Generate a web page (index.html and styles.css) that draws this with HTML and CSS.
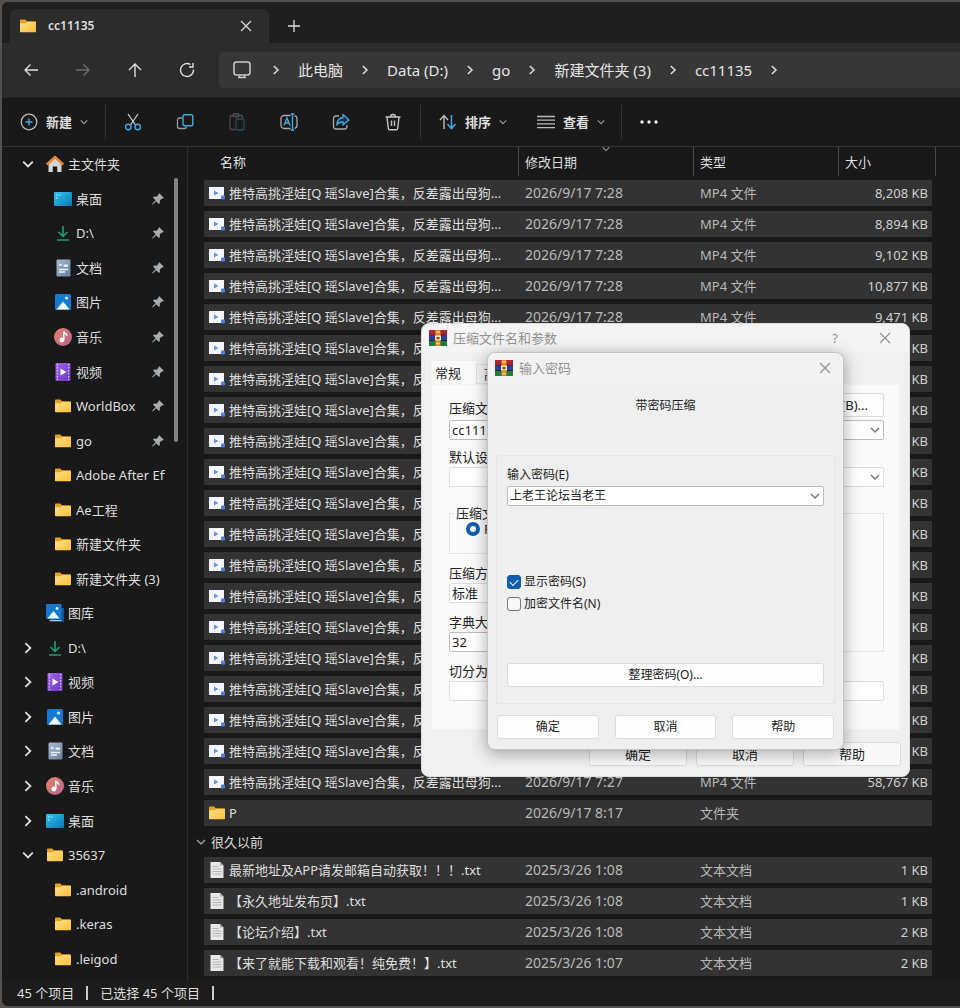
FILE: index.html
```html
<!DOCTYPE html>
<html lang="zh-CN">
<head>
<meta charset="utf-8">
<meta name="viewport" content="width=device-width, initial-scale=1">
<title>cc11135</title>
<link rel="stylesheet" href="styles.css">
</head>
<body>
<svg class="sprite" aria-hidden="true">
  <defs>
    <linearGradient id="g-folder" x1="0" y1="0" x2="1" y2="1"><stop offset="0" stop-color="#ffe08a"/><stop offset="1" stop-color="#fbbf3c"/></linearGradient>
    <linearGradient id="g-desk" x1="0" y1="0" x2="1" y2="1"><stop offset="0" stop-color="#35c3ea"/><stop offset="1" stop-color="#0b78b8"/></linearGradient>
    <linearGradient id="g-music" x1="0" y1="0" x2="1" y2="1"><stop offset="0" stop-color="#e8835f"/><stop offset="1" stop-color="#b5619a"/></linearGradient>
    <linearGradient id="g-video" x1="0" y1="0" x2="1" y2="1"><stop offset="0" stop-color="#a566ea"/><stop offset="1" stop-color="#6a35c4"/></linearGradient>
    <linearGradient id="g-doc" x1="0" y1="0" x2="1" y2="1"><stop offset="0" stop-color="#a9bace"/><stop offset="1" stop-color="#64809f"/></linearGradient>
    <symbol id="folder" viewBox="0 0 18 18"><path d="M1 3.6c0-.6.4-1 1-1h4.2l1.8 1.7h8c.6 0 1 .4 1 1V8H1z" fill="#e9a21f"/><path d="M1 6.3h5.6l1.6-1.2H16c.6 0 1 .4 1 1v8.2c0 .6-.4 1-1 1H2c-.6 0-1-.4-1-1z" fill="url(#g-folder)"/></symbol>
    <symbol id="desk" viewBox="0 0 18 18"><rect x="0" y="2" width="18" height="14" rx="1.2" fill="url(#g-desk)"/><path d="M2 5h1.6M2 8h1.6M5 5h1.4" stroke="#c8f4ff" stroke-width="1.2"/></symbol>
    <symbol id="down" viewBox="0 0 18 18"><path d="M9 2v10M4.500 8L9 12.400 13.500 8M3 16h12" fill="none" stroke="#1a9a6c" stroke-width="1.700"/></symbol>
    <symbol id="doc" viewBox="0 0 18 18"><rect x="2.500" y=".5" width="14" height="17" rx="1.300" fill="url(#g-doc)"/><path d="M5 6h3M10.500 7h3.500M5 10.500h9M5 13h6" stroke="#e9f1f9" stroke-width="1.400"/><path d="M9.500 5.500h4.500v2H9.500z" fill="#e9f1f9"/></symbol>
    <symbol id="pic" viewBox="0 0 18 18"><rect x="1" y="1" width="16" height="16" rx="1.500" fill="#1479cf"/><path d="M2.500 16.500L9 8.500l6.500 8z" fill="#f4fbff"/><circle cx="12.500" cy="5" r="1.500" fill="#d6f1ff"/></symbol>
    <symbol id="gallery" viewBox="0 0 18 18"><path d="M4 4h14v14H4z" fill="#14558f"/><path d="M3.500 16.500h12" stroke="#a8d4f2"/><rect x="0" y="0" width="15.500" height="15" rx="1.300" fill="#1479cf"/><path d="M1.500 14.500L7.500 7l6 7.500z" fill="#f4fbff"/><circle cx="11" cy="4.500" r="1.400" fill="#d6f1ff"/></symbol>
    <symbol id="music" viewBox="0 0 18 18"><circle cx="9" cy="9" r="9" fill="url(#g-music)"/><path d="M9.800 12V3.500c.5 2 3 2 3 4.200" fill="none" stroke="#fff" stroke-width="1.500"/><circle cx="7.900" cy="12" r="2.400" fill="#fff"/></symbol>
    <symbol id="video" viewBox="0 0 18 18"><rect x="1.500" y="0" width="15" height="18" rx="1.300" fill="url(#g-video)"/><path d="M3.400 1v16M14.600 1v16" stroke="#d9bcff" stroke-width="1.300" stroke-dasharray="1.400 1.600"/><path d="M6.500 5.500v7L12.500 9z" fill="#fff"/></symbol>
    <symbol id="home" viewBox="0 0 18 18"><path d="M2.500 8.500L9 3l6.500 5.500V17h-4.300v-5.500H6.800V17H2.500z" fill="#d6d3d3"/><path d="M.8 9.500L9 2l8.200 7.500" fill="none" stroke="#e08335" stroke-width="2.400" stroke-linejoin="round"/></symbol>
    <symbol id="pin" viewBox="0 0 14 14"><path d="M8.300 1.200l4.500 4.500-1 .9-1-.1-2 2 .1 2.500-1 1-2.700-2.700L1.700 12.500l-.5-.2.2-.7 3.200-3.400L2 5.600l1-1 2.500.1 2-2-.1-.8z" fill="#a9adb0"/></symbol>
    <symbol id="cr" viewBox="0 0 10 10"><path d="M2.800 1l4.200 4-4.200 4" fill="none" stroke="currentColor" stroke-width="1.500"/></symbol>
    <symbol id="cd" viewBox="0 0 10 10"><path d="M1 3l4 4 4-4" fill="none" stroke="currentColor" stroke-width="1.500"/></symbol>
    <symbol id="x" viewBox="0 0 12 12"><path d="M1 1l10 10M11 1L1 11" fill="none" stroke="currentColor" stroke-width="1.200"/></symbol>
    <symbol id="mp4" viewBox="0 0 18 18"><rect x="1" y="3" width="15" height="12" fill="#f3f6ff"/><path d="M6 6.500v5l4.500-2.500z" fill="#6f8fdc"/><rect x="13" y="11.500" width="4" height="4" rx="1" fill="#4f7edb"/></symbol>
    <symbol id="txt" viewBox="0 0 18 18"><path d="M2.500 1H12l3.500 3.500V17h-13z" fill="#e8e8e8"/><path d="M12 1v3.500h3.500" fill="#aaa"/><path d="M4.500 5.500h6M4.500 8h9M4.500 10.500h9M4.500 13h9" stroke="#b4b4b4"/></symbol>
    <symbol id="rar" viewBox="0 0 18 16"><rect y="0" width="18" height="5.300" fill="#b3243a"/><rect y="5.300" width="18" height="5.300" fill="#2b3f9b"/><rect y="10.600" width="18" height="5.400" fill="#1f7a3c"/><path d="M0 5.200h18M0 10.500h18" stroke="#2a1a22" stroke-width=".9"/><rect x="6.500" y="0" width="5" height="16" fill="#d98b2b"/><path d="M7 2h4M7 13.500h4" stroke="#f6cf5a" stroke-width="1.500"/><rect x="6" y="5.500" width="6" height="5" fill="#f1dfb0"/><rect x="7.500" y="7" width="3" height="2.200" fill="#8a4a1c"/></symbol>
  </defs>
</svg>

<div class="window">
  <header class="tabs">
    <div class="tab"><svg class="i18"><use href="#folder"/></svg><span class="tab-name">cc11135</span><button class="plain" aria-label="关闭标签页"><svg class="i12"><use href="#x"/></svg></button></div>
    <button class="plain new-tab" aria-label="新标签页"><svg class="i12" viewBox="0 0 12 12"><path d="M6 0v12M0 6h12" stroke="currentColor" stroke-width="1.300"/></svg></button>
  </header>

  <nav class="navbar" aria-label="导航">
    <div class="nav-buttons">
      <button class="plain" aria-label="后退"><svg class="i16" viewBox="0 0 16 16"><path d="M15 8H2M7.500 2.500L2 8l5.500 5.500" fill="none" stroke="currentColor" stroke-width="1.400"/></svg></button>
      <button class="plain dim" aria-label="前进"><svg class="i16" viewBox="0 0 16 16"><path d="M1 8h13M8.500 2.500L14 8l-5.500 5.500" fill="none" stroke="currentColor" stroke-width="1.400"/></svg></button>
      <button class="plain" aria-label="上一级"><svg class="i16" viewBox="0 0 16 16"><path d="M8 15V2M2 8l6-6 6 6" fill="none" stroke="currentColor" stroke-width="1.400"/></svg></button>
      <button class="plain" aria-label="刷新"><svg class="i16" viewBox="0 0 16 16"><path d="M14.500 7.500A6.500 6.500 0 1 1 11.500 2.500M14 1v4h-4" fill="none" stroke="currentColor" stroke-width="1.400"/></svg></button>
    </div>
    <div class="address">
      <svg class="i18 pc" viewBox="0 0 18 18"><rect x="1" y="1" width="16" height="13" rx="2.500" fill="none" stroke="#ccc" stroke-width="1.500"/><path d="M5 16.500h8M6.500 14.500v2M11.500 14.500v2" stroke="#ccc" stroke-width="1.400"/></svg>
      <svg class="i10"><use href="#cr"/></svg><a href="#">此电脑</a>
      <svg class="i10"><use href="#cr"/></svg><a href="#">Data (D:)</a>
      <svg class="i10"><use href="#cr"/></svg><a href="#">go</a>
      <svg class="i10"><use href="#cr"/></svg><a href="#">新建文件夹 (3)</a>
      <svg class="i10"><use href="#cr"/></svg><a href="#">cc11135</a>
      <svg class="i10"><use href="#cr"/></svg>
    </div>
  </nav>

  <div class="toolbar" role="toolbar" aria-label="命令">
    <button class="cmd cmd-new"><svg class="i18" viewBox="0 0 18 18"><circle cx="9" cy="9" r="7.800" fill="none" stroke="#bbb" stroke-width="1.300"/><path d="M9 5.500v7M5.500 9h7" stroke="#45a9e0" stroke-width="1.400"/></svg>新建<svg class="i8"><use href="#cd"/></svg></button>
    <span class="rule"></span>
    <button class="tool" aria-label="剪切"><svg class="i18" viewBox="0 0 18 18"><path d="M4 1l7.500 11M14 1L6.500 12" stroke="#ccc" stroke-width="1.300"/><g fill="none" stroke="#45a9e0" stroke-width="1.400"><circle cx="4.300" cy="14" r="2.700"/><circle cx="13.700" cy="14" r="2.700"/></g></svg></button>
    <button class="tool" aria-label="复制"><svg class="i18" viewBox="0 0 18 18"><path d="M6 5H3.500A2 2 0 0 0 1.500 7v6.500a2 2 0 0 0 2 2h5a2 2 0 0 0 2-1.500" fill="none" stroke="#999" stroke-width="1.300"/><rect x="7" y="1.800" width="9.800" height="11" rx="1.800" fill="none" stroke="#45a9e0" stroke-width="1.400"/></svg></button>
    <button class="tool" aria-label="粘贴"><svg class="i18" viewBox="0 0 18 18"><path d="M7 16.500H3.500a1.500 1.500 0 0 1-1.500-1.500V4a1.500 1.500 0 0 1 1.500-1.500H5M11 2.500h2A1.500 1.500 0 0 1 14.500 4v1M5.500 1h5v2.500h-5z" fill="none" stroke="#4d4d4d" stroke-width="1.300"/><rect x="8" y="6" width="8" height="11" rx="1.300" fill="none" stroke="#25505a" stroke-width="1.300"/></svg></button>
    <button class="tool" aria-label="重命名"><svg class="i18" viewBox="0 0 18 18"><path d="M10.500 2.500H4A3 3 0 0 0 1 5.500v7a3 3 0 0 0 3 3h6.500M14.500 2.700c1.600.3 2.500 1.300 2.500 2.800v7c0 1.500-.9 2.500-2.500 2.800" fill="none" stroke="#aaa" stroke-width="1.300"/><path d="M4 12.500L7 5l3 7.500M5 10h4M12.500 1v16M10.700 1h3.600M10.700 17h3.600" fill="none" stroke="#45a9e0" stroke-width="1.400"/></svg></button>
    <button class="tool" aria-label="共享"><svg class="i18" viewBox="0 0 18 18"><path d="M7 3H4A2.500 2.500 0 0 0 1.500 5.500v8A2.500 2.500 0 0 0 4 16h8.500a2.500 2.500 0 0 0 2.500-2.500V12" fill="none" stroke="#aaa" stroke-width="1.300"/><path d="M11 1.500L17 7l-6 5V9C8 9 6 10 4.800 12c.2-4 2.500-7 6.200-7.500z" fill="#12364b" stroke="#45a9e0" stroke-width="1.300" stroke-linejoin="round"/></svg></button>
    <button class="tool" aria-label="删除"><svg class="i18" viewBox="0 0 18 18"><path d="M1.500 4h15M6.500 4a2.500 2.500 0 0 1 5 0M3 4l1.300 11.500a1.500 1.500 0 0 0 1.500 1.300h6.400a1.500 1.500 0 0 0 1.500-1.300L15 4M7.500 7.500v5.500M10.500 7.500v5.500" fill="none" stroke="#c4c4c4" stroke-width="1.400"/></svg></button>
    <span class="rule"></span>
    <button class="cmd cmd-sort"><svg class="i18" viewBox="0 0 18 18"><path d="M5 16V3M1 7l4-4.500L9 7" fill="none" stroke="#bbb" stroke-width="1.400"/><path d="M12.500 2v13.500M8.500 11l4 4.500 4-4.500" fill="none" stroke="#45a9e0" stroke-width="1.500"/></svg>排序<svg class="i8"><use href="#cd"/></svg></button>
    <button class="cmd cmd-view"><svg class="i18" viewBox="0 0 18 18"><path d="M0 3.500h18M0 7.200h18M0 10.900h18M0 14.600h18" stroke="#bbb" stroke-width="1.300"/></svg>查看<svg class="i8"><use href="#cd"/></svg></button>
    <span class="rule"></span>
    <button class="tool" aria-label="更多"><svg class="i18" viewBox="0 0 18 18"><g fill="#eee"><circle cx="2" cy="9" r="1.700"/><circle cx="9" cy="9" r="1.700"/><circle cx="16" cy="9" r="1.700"/></g></svg></button>
  </div>

  <div class="content">
    <aside class="sidebar">
      <ul class="tree">
        <li class="node"><svg class="i12 twist"><use href="#cd"/></svg><svg class="i18"><use href="#home"/></svg><span>主文件夹</span></li>
        <li class="node sub"><svg class="i18"><use href="#desk"/></svg><span>桌面</span><svg class="i14"><use href="#pin"/></svg></li>
        <li class="node sub"><svg class="i18"><use href="#down"/></svg><span>D:\</span><svg class="i14"><use href="#pin"/></svg></li>
        <li class="node sub"><svg class="i18"><use href="#doc"/></svg><span>文档</span><svg class="i14"><use href="#pin"/></svg></li>
        <li class="node sub"><svg class="i18"><use href="#pic"/></svg><span>图片</span><svg class="i14"><use href="#pin"/></svg></li>
        <li class="node sub"><svg class="i18"><use href="#music"/></svg><span>音乐</span><svg class="i14"><use href="#pin"/></svg></li>
        <li class="node sub"><svg class="i18"><use href="#video"/></svg><span>视频</span><svg class="i14"><use href="#pin"/></svg></li>
        <li class="node sub"><svg class="i18"><use href="#folder"/></svg><span>WorldBox</span><svg class="i14"><use href="#pin"/></svg></li>
        <li class="node sub"><svg class="i18"><use href="#folder"/></svg><span>go</span><svg class="i14"><use href="#pin"/></svg></li>
        <li class="node sub"><svg class="i18"><use href="#folder"/></svg><span>Adobe After Effects</span></li>
        <li class="node sub"><svg class="i18"><use href="#folder"/></svg><span>Ae工程</span></li>
        <li class="node sub"><svg class="i18"><use href="#folder"/></svg><span>新建文件夹</span></li>
        <li class="node sub"><svg class="i18"><use href="#folder"/></svg><span>新建文件夹 (3)</span></li>
        <li class="node leaf"><svg class="i18"><use href="#gallery"/></svg><span>图库</span></li>
        <li class="node"><svg class="i12 twist"><use href="#cr"/></svg><svg class="i18"><use href="#down"/></svg><span>D:\</span></li>
        <li class="node"><svg class="i12 twist"><use href="#cr"/></svg><svg class="i18"><use href="#video"/></svg><span>视频</span></li>
        <li class="node"><svg class="i12 twist"><use href="#cr"/></svg><svg class="i18"><use href="#pic"/></svg><span>图片</span></li>
        <li class="node"><svg class="i12 twist"><use href="#cr"/></svg><svg class="i18"><use href="#doc"/></svg><span>文档</span></li>
        <li class="node"><svg class="i12 twist"><use href="#cr"/></svg><svg class="i18"><use href="#music"/></svg><span>音乐</span></li>
        <li class="node"><svg class="i12 twist"><use href="#cr"/></svg><svg class="i18"><use href="#desk"/></svg><span>桌面</span></li>
        <li class="node"><svg class="i12 twist"><use href="#cd"/></svg><svg class="i18"><use href="#folder"/></svg><span>35637</span></li>
        <li class="node sub"><svg class="i18"><use href="#folder"/></svg><span>.android</span></li>
        <li class="node sub"><svg class="i18"><use href="#folder"/></svg><span>.keras</span></li>
        <li class="node sub"><svg class="i18"><use href="#folder"/></svg><span>.leigod</span></li>
      </ul>
      <div class="thumb"></div>
    </aside>

    <main class="list">
      <table class="files">
        <colgroup><col><col class="c-date"><col class="c-type"><col class="c-size"><col class="c-end"></colgroup>
        <thead>
          <tr><th class="h-name">名称</th><th>修改日期<svg class="sort"><use href="#cd"/></svg></th><th>类型</th><th>大小</th><th class="end"></th></tr>
        </thead>
        <tbody>
          <tr><td><svg class="i18"><use href="#mp4"/></svg>推特高挑淫娃[Q 瑶Slave]合集，反差露出母狗...</td><td>2026/9/17 7:28</td><td>MP4 文件</td><td>8,208 KB</td></tr>
          <tr><td><svg class="i18"><use href="#mp4"/></svg>推特高挑淫娃[Q 瑶Slave]合集，反差露出母狗...</td><td>2026/9/17 7:28</td><td>MP4 文件</td><td>8,894 KB</td></tr>
          <tr><td><svg class="i18"><use href="#mp4"/></svg>推特高挑淫娃[Q 瑶Slave]合集，反差露出母狗...</td><td>2026/9/17 7:28</td><td>MP4 文件</td><td>9,102 KB</td></tr>
          <tr><td><svg class="i18"><use href="#mp4"/></svg>推特高挑淫娃[Q 瑶Slave]合集，反差露出母狗...</td><td>2026/9/17 7:28</td><td>MP4 文件</td><td>10,877 KB</td></tr>
          <tr><td><svg class="i18"><use href="#mp4"/></svg>推特高挑淫娃[Q 瑶Slave]合集，反差露出母狗...</td><td>2026/9/17 7:28</td><td>MP4 文件</td><td>9,471 KB</td></tr>
          <tr><td><svg class="i18"><use href="#mp4"/></svg>推特高挑淫娃[Q 瑶Slave]合集，反差露出母狗...</td><td></td><td></td><td>KB</td></tr>
          <tr><td><svg class="i18"><use href="#mp4"/></svg>推特高挑淫娃[Q 瑶Slave]合集，反差露出母狗...</td><td></td><td></td><td>KB</td></tr>
          <tr><td><svg class="i18"><use href="#mp4"/></svg>推特高挑淫娃[Q 瑶Slave]合集，反差露出母狗...</td><td></td><td></td><td>KB</td></tr>
          <tr><td><svg class="i18"><use href="#mp4"/></svg>推特高挑淫娃[Q 瑶Slave]合集，反差露出母狗...</td><td></td><td></td><td>KB</td></tr>
          <tr><td><svg class="i18"><use href="#mp4"/></svg>推特高挑淫娃[Q 瑶Slave]合集，反差露出母狗...</td><td></td><td></td><td>KB</td></tr>
          <tr><td><svg class="i18"><use href="#mp4"/></svg>推特高挑淫娃[Q 瑶Slave]合集，反差露出母狗...</td><td></td><td></td><td>KB</td></tr>
          <tr><td><svg class="i18"><use href="#mp4"/></svg>推特高挑淫娃[Q 瑶Slave]合集，反差露出母狗...</td><td></td><td></td><td>KB</td></tr>
          <tr><td><svg class="i18"><use href="#mp4"/></svg>推特高挑淫娃[Q 瑶Slave]合集，反差露出母狗...</td><td></td><td></td><td>KB</td></tr>
          <tr><td><svg class="i18"><use href="#mp4"/></svg>推特高挑淫娃[Q 瑶Slave]合集，反差露出母狗...</td><td></td><td></td><td>KB</td></tr>
          <tr><td><svg class="i18"><use href="#mp4"/></svg>推特高挑淫娃[Q 瑶Slave]合集，反差露出母狗...</td><td></td><td></td><td>KB</td></tr>
          <tr><td><svg class="i18"><use href="#mp4"/></svg>推特高挑淫娃[Q 瑶Slave]合集，反差露出母狗...</td><td></td><td></td><td>KB</td></tr>
          <tr><td><svg class="i18"><use href="#mp4"/></svg>推特高挑淫娃[Q 瑶Slave]合集，反差露出母狗...</td><td></td><td></td><td>KB</td></tr>
          <tr><td><svg class="i18"><use href="#mp4"/></svg>推特高挑淫娃[Q 瑶Slave]合集，反差露出母狗...</td><td></td><td></td><td>KB</td></tr>
          <tr><td><svg class="i18"><use href="#mp4"/></svg>推特高挑淫娃[Q 瑶Slave]合集，反差露出母狗...</td><td></td><td></td><td>KB</td></tr>
          <tr><td><svg class="i18"><use href="#mp4"/></svg>推特高挑淫娃[Q 瑶Slave]合集，反差露出母狗...</td><td>2026/9/17 7:27</td><td>MP4 文件</td><td>58,767 KB</td></tr>
          <tr><td><svg class="i18"><use href="#folder"/></svg>P</td><td>2026/9/17 8:17</td><td>文件夹</td><td></td></tr>
        </tbody>
        <tbody>
          <tr><th class="group" colspan="5"><button class="group-toggle"><svg class="i10"><use href="#cd"/></svg>很久以前</button></th></tr>
          <tr><td><svg class="i18"><use href="#txt"/></svg>最新地址及APP请发邮箱自动获取！！！.txt</td><td>2025/3/26 1:08</td><td>文本文档</td><td>1 KB</td></tr>
          <tr><td><svg class="i18"><use href="#txt"/></svg>【永久地址发布页】.txt</td><td>2025/3/26 1:08</td><td>文本文档</td><td>1 KB</td></tr>
          <tr><td><svg class="i18"><use href="#txt"/></svg>【论坛介绍】.txt</td><td>2025/3/26 1:08</td><td>文本文档</td><td>2 KB</td></tr>
          <tr><td><svg class="i18"><use href="#txt"/></svg>【来了就能下载和观看！纯免费！】.txt</td><td>2025/3/26 1:07</td><td>文本文档</td><td>2 KB</td></tr>
        </tbody>
      </table>
    </main>
  </div>

  <footer class="status"><span>45 个项目</span><span class="bar"></span><span>已选择 45 个项目</span><span class="bar"></span></footer>
</div>

<section class="dialog archive" role="dialog" aria-label="压缩文件名和参数">
  <header class="caption"><svg class="rar"><use href="#rar"/></svg><span>压缩文件名和参数</span><button class="plain" aria-label="帮助主题">?</button><button class="plain" aria-label="关闭"><svg class="i12"><use href="#x"/></svg></button></header>
  <div class="sheet-tabs" role="tablist"><button role="tab" class="sheet-tab on" aria-selected="true">常规</button><button role="tab" class="sheet-tab">高级</button></div>
  <div class="sheet">
    <div class="row"><label for="arc">压缩文件名(A)</label><button class="btn browse">浏览(B)...</button></div>
    <div class="combo"><select id="arc"><option>cc11135.rar</option></select><svg class="i10"><use href="#cd"/></svg></div>
    <label class="cap" for="profile">默认设置</label>
    <div class="combo light"><select id="profile"><option></option></select><svg class="i10"><use href="#cd"/></svg></div>
    <div class="split">
      <div class="left">
        <fieldset class="format"><legend>压缩文件格式</legend><input type="radio" id="fmt" name="fmt" checked><label for="fmt">RAR</label></fieldset>
        <label class="cap" for="method">压缩方式(C)</label>
        <div class="combo light"><select id="method"><option>标准</option></select></div>
        <label class="cap" for="dict">字典大小(I)</label>
        <div class="combo"><select id="dict"><option>32</option></select></div>
      </div>
      <div class="options"></div>
    </div>
    <label class="cap" for="vol">切分为分卷(V)，大小</label>
    <input class="volume" id="vol" type="text">
  </div>
  <div class="actions"><button class="btn">确定</button><button class="btn">取消</button><button class="btn">帮助</button></div>
</section>

<section class="dialog password" role="dialog" aria-label="输入密码">
  <header class="caption"><svg class="rar"><use href="#rar"/></svg><span>输入密码</span><button class="plain" aria-label="关闭"><svg class="i12"><use href="#x"/></svg></button></header>
  <p class="heading">带密码压缩</p>
  <div class="box">
    <label for="pwd">输入密码(E)</label>
    <div class="combo"><select id="pwd"><option>上老王论坛当老王</option></select><svg class="i10"><use href="#cd"/></svg></div>
    <div class="checks">
      <label class="check"><input type="checkbox" checked>显示密码(S)</label>
      <label class="check"><input type="checkbox">加密文件名(N)</label>
    </div>
    <button class="btn organize">整理密码(O)...</button>
  </div>
  <div class="actions"><button class="btn">确定</button><button class="btn">取消</button><button class="btn">帮助</button></div>
</section>
</body>
</html>
```
FILE: styles.css
```css
* { box-sizing: border-box; }

body {
  margin: 0;
  min-height: 100vh;
  display: flex;
  position: relative;
  background: #55504d;
  color: #dedede;
  font: 13px/18px "Noto Sans", "Noto Sans CJK SC", sans-serif;
}

button, select, input { font: inherit; color: inherit; }
button { padding: 0; border: 0; background: none; }
svg { display: block; flex: none; }
.sprite { position: absolute; width: 0; height: 0; }
.i8 { width: 8px; height: 8px; }
.i10 { width: 10px; height: 10px; }
.i12 { width: 12px; height: 12px; }
.i14 { width: 14px; height: 14px; }
.i16 { width: 16px; height: 16px; }
.i18 { width: 18px; height: 18px; }
.plain { display: grid; place-items: center; }

.window {
  flex: 1;
  min-width: 0;
  margin: 2px 0 2px 2px;
  display: flex;
  flex-direction: column;
  background: #191919;
  border-radius: 6px 0 0 6px;
  overflow: hidden;
}

/* Tab strip */
.tabs { display: flex; background: #1f1f1f; padding: 7px 0 0 8px; }
.tab {
  display: flex;
  align-items: center;
  width: 259px;
  height: 34px;
  padding: 0 17px 0 9px;
  background: #2c2c2c;
  border-radius: 7px 7px 0 0;
}
.tab-name { flex: 1; margin-left: 11px; font-size: 12px; font-weight: 600; }
.new-tab { width: 50px; height: 34px; }

/* Navigation */
.navbar { display: flex; align-items: center; height: 54px; background: #2c2c2c; }
.nav-buttons { display: flex; gap: 36px; padding: 0 24px 0 21px; }
.dim { color: #6b6b6b; }
.address {
  flex: 1;
  display: flex;
  align-items: center;
  gap: 17px;
  height: 36px;
  padding-left: 14px;
  background: #373737;
  border-radius: 5px 0 0 5px;
  font-size: 15px;
  white-space: nowrap;
}
.address a { color: #e4e4e4; text-decoration: none; }
.pc { margin-right: 3px; }

/* Commands */
.toolbar {
  display: flex;
  align-items: center;
  height: 50px;
  border-top: 1px solid #222;
  border-bottom: 1px solid #333;
}
.cmd { display: flex; align-items: center; gap: 8px; font-weight: 600; }
.cmd .i8 { color: #999; }
.cmd-new { padding: 0 16px 0 18px; }
.cmd-sort { padding: 0 15px 0 17px; }
.cmd-view { padding: 0 15px; }
.tool { display: grid; place-items: center; width: 52px; height: 36px; }
.rule { width: 1px; height: 34px; margin: 0 1px; background: #333; }

.content { display: flex; }

/* Folder tree */
.sidebar { position: relative; width: 186px; flex: none; border-right: 1px solid #2d2d2d; padding-bottom: 5px; }
.tree { display: grid; grid-auto-rows: 1fr; height: 100%; margin: 0; padding: 0; list-style: none; }
.node { display: flex; align-items: center; gap: 4px; padding: 0 22px 0 20px; white-space: nowrap; min-width: 0; }
.node.leaf { padding-left: 44px; }
.node.sub { padding-left: 52px; }
.node span { flex: 1; overflow: hidden; }
.twist { margin-right: 8px; }
.thumb { position: absolute; top: 31px; right: 9px; width: 4px; height: 264px; border-radius: 2px; background: #858585; }

/* File list */
.list { flex: 1; min-width: 0; padding: 0 24px 0 16px; }
.files { width: 100%; table-layout: fixed; border-collapse: separate; border-spacing: 0; white-space: nowrap; }
.c-date { width: 175px; }
.c-type { width: 145px; }
.c-size { width: 94px; }
.c-end { width: 4px; }
.files thead th {
  position: relative;
  height: 33px;
  padding: 0 0 0 7px;
  border-bottom: 4px solid #191919;
  background: linear-gradient(#4a4a4a, #4a4a4a) left / 1px 100% no-repeat padding-box;
  font-weight: 400;
  text-align: left;
}
.files thead .h-name { padding-left: 16px; background: none; }
.files thead .end { background-position: right; }
.sort { position: absolute; top: -2px; left: 83px; width: 10px; height: 8px; color: #888; }
.files td {
  height: 31px;
  padding: 0 4px 0 7px;
  background: #333;
  border-bottom: 5px solid #191919;
  color: #b9b9b9;
}
.files td:first-child { padding-left: 4px; color: #dedede; }
.files td:first-child .i18 { display: inline-block; margin-right: 3px; vertical-align: -4px; }
.files td:nth-child(2) { font-size: 14px; }
.files td:nth-child(4) { text-align: right; color: #cfcfcf; }
.group { height: 26px; padding: 0 0 5px; text-align: left; font-weight: 400; }
.group-toggle { display: flex; align-items: center; gap: 5px; margin-left: -8px; }
.group-toggle svg { color: #999; }

.status { flex: 1; display: flex; align-items: center; gap: 12px; padding: 0 15px 2px; background: #1c1c1c; }
.bar { width: 2px; height: 14px; background: #ccc; }

/* Dialogs */
.dialog {
  position: absolute;
  display: flex;
  flex-direction: column;
  border-radius: 8px;
  color: #222;
  line-height: 16px;
  white-space: nowrap;
}
.archive { left: 421px; top: 323px; width: 489px; background: #f0f0f0; border: 1px solid #ddd; font-size: 13px; }
.password { left: 487px; top: 352px; width: 357px; background: #efefef; border: 1px solid #c4c4c4; box-shadow: 0 3px 16px rgba(0, 0, 0, .35); font-size: 12px; }
.caption { display: flex; align-items: center; height: 28px; padding: 0 18px 0 7px; color: #929292; font-size: 13px; background: #f4f4f4; border-radius: 8px 8px 0 0; }
.caption span { flex: 1; margin-left: 6px; }
.caption .plain + .plain { margin-left: 41px; }
.password .caption { height: 30px; padding-right: 12px; background: #f2f2f2; }
.rar { width: 18px; height: 16px; }

.btn { height: 24px; background: #fdfdfd; border: 1px solid #dcdcdc; border-radius: 3px; }
.actions { display: flex; justify-content: flex-end; }
.archive .actions { gap: 9px; padding: 12px 8px 10px; }
.archive .actions .btn { width: 98px; background: #f8f8f8; }
.password .actions { gap: 16px; padding: 11px 9px 10px; }
.password .actions .btn { flex: 1; }

.combo { display: grid; align-items: center; }
.combo select, .combo svg { grid-area: 1 / 1; }
.combo select, .volume {
  appearance: none;
  width: 100%;
  height: 20px;
  margin: 0;
  padding: 0 2px;
  background: #fff;
  border: 1px solid #bdbdbd;
  border-radius: 2px;
}
.combo.light select, .volume { border-color: #dedede; }
.combo svg { justify-self: end; margin-right: 4px; color: #777; pointer-events: none; }

.sheet-tabs { display: flex; align-items: end; padding: 9px 9px 0; }
.sheet-tab { height: 20px; padding: 0 7px; background: #f3f3f3; border: 1px solid #e0e0e0; }
.sheet-tab.on { height: 23px; width: 45px; padding: 0 4px; text-align: left; background: #fafafa; border: 0; }
.sheet { display: flex; flex-direction: column; margin: 0 9px; padding: 8px 15px 28px 17px; background: #fafafa; border: 1px solid #f2f2f2; }
.row { display: flex; justify-content: space-between; align-items: center; margin-bottom: 3px; }
.row label { padding-top: 6px; }
.browse { padding: 0 15px; }
.cap { margin: 9px 0 2px; }
.left .cap, .split + .cap { margin-top: 11px; }
.split { display: grid; grid-template-columns: 1fr 1fr; gap: 12px; margin-top: 18px; }
.left { display: flex; flex-direction: column; }
.format { display: flex; align-items: center; min-width: 0; height: 49px; margin: 0; padding: 0 0 0 16px; border: 1px solid #e4e4e4; }
.format legend { margin-left: -12px; padding: 0 2px; }
.format input { appearance: none; width: 14px; height: 14px; margin: 0 4px 0 0; border: 4px solid #0b5cad; border-radius: 50%; background: #fff; }
.options { margin-top: 8px; border: 1px solid #e4e4e4; }

.heading { margin: 15px 0 41px; text-align: center; }
.box { display: flex; flex-direction: column; margin: 0 7px 0 8px; padding: 11px 11px 16px 10px; border: 1px solid #e5e5e5; border-radius: 3px; }
.box .combo { margin-top: 3px; }
.checks { display: grid; gap: 6px; margin: 68px 0 51px; }
.check { display: flex; align-items: center; gap: 3px; }
.check input { appearance: none; width: 14px; height: 14px; margin: 0; border: 1px solid #777; border-radius: 3px; background: #f8f8f8; }
.check input:checked { display: grid; place-items: center; background: #0b5cad; border-color: #0b5cad; }
.check input:checked::before { content: ""; width: 7px; height: 4px; margin-bottom: 2px; border: solid #fff; border-width: 0 0 1px 1px; transform: rotate(-45deg); }
```
